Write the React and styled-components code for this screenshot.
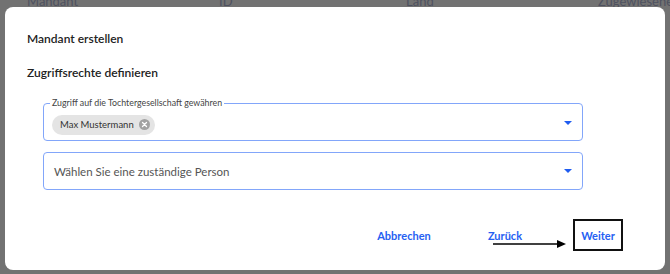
import React from "react";
import styled, { createGlobalStyle } from "styled-components";

const GlobalStyle = createGlobalStyle`
  html, body {
    margin: 0;
    padding: 0;
    width: 670px;
    height: 274px;
    overflow: hidden;
    background: #737373;
    font-family: "Lato", "Open Sans", sans-serif;
  }
`;

const Backdrop = styled.div`
  position: relative;
  width: 670px;
  height: 274px;
  background: #727272;
  padding: 7px 5px 4px 5px;
  box-sizing: border-box;
`;

const HeaderRow = styled.div`
  position: absolute;
  top: -7px;
  left: 0;
  right: 0;
  display: grid;
  grid-template-columns: 27px 192px 187px 192px 1fr;
  font-size: 13px;
  color: #4e5160;
  white-space: nowrap;
  overflow: hidden;
`;

const Modal = styled.div`
  position: relative;
  height: 100%;
  background: #fff;
  border-radius: 8px;
  padding: 24px 22px 0 22px;
  box-sizing: border-box;
  display: flex;
  flex-direction: column;
`;

const Title = styled.div`
  font-size: 12px;
  font-weight: 600;
  color: #222;
  line-height: 16px;
`;

const SubTitle = styled(Title)`
  margin-top: 18px;
`;

const Fields = styled.div`
  margin: 22px 0 0 16px;
  width: 540px;
  display: flex;
  flex-direction: column;
  gap: 11px;
`;

const Field = styled.div`
  height: 38px;
  box-sizing: border-box;
  border: 1.5px solid #82a6fa;
  border-radius: 4px;
  padding: 0 10px 0 8px;
  display: flex;
  align-items: center;
  justify-content: space-between;
  position: relative;
`;

const Legend = styled.span`
  position: absolute;
  top: -6px;
  left: 6px;
  padding: 0 2px;
  background: #fff;
  font-size: 8.8px;
  line-height: 10px;
  color: #444;
  white-space: nowrap;
`;

const Chip = styled.span`
  display: inline-flex;
  align-items: center;
  gap: 5px;
  height: 20px;
  padding: 0 5px 0 8px;
  margin-top: 5px;
  border-radius: 10px;
  background: #e4e4e4;
  font-size: 9.5px;
  color: #333;
`;

const ChipClose = styled.span`
  width: 11px;
  height: 11px;
  border-radius: 50%;
  background: #a2a2a2;
  display: inline-flex;
  align-items: center;
  justify-content: center;
`;

const Placeholder = styled.span`
  font-size: 11.5px;
  color: #555;
  padding-left: 2px;
`;

const Caret = styled.span`
  width: 0;
  height: 0;
  border-left: 4px solid transparent;
  border-right: 4px solid transparent;
  border-top: 4px solid #1f5cf0;
  margin-top: ${(p) => p.offset || 0}px;
`;

const Footer = styled.div`
  position: relative;
  margin-top: 29px;
  display: flex;
  align-items: center;
  justify-content: flex-end;
  padding-right: 20px;
`;

const TextButton = styled.button`
  background: none;
  border: ${(p) => (p.marked ? "2px solid #111" : "2px solid transparent")};
  font-family: inherit;
  font-size: 11px;
  font-weight: 700;
  color: #2660f2;
  padding: 0;
  height: 32px;
  width: ${(p) => p.w}px;
  margin-left: ${(p) => p.gap || 0}px;
  cursor: pointer;
`;

const Arrow = styled.svg`
  position: absolute;
  left: 466px;
  top: 20px;
`;

export default function App() {
  return (
    <>
      <GlobalStyle />
      <Backdrop>
        <HeaderRow>
          <span />
          <span>Mandant</span>
          <span>ID</span>
          <span>Land</span>
          <span>Zugewiesene</span>
        </HeaderRow>
        <Modal>
          <Title>Mandant erstellen</Title>
          <SubTitle>Zugriffsrechte definieren</SubTitle>
          <Fields>
            <Field>
              <Legend>Zugriff auf die Tochtergesellschaft gewähren</Legend>
              <Chip>
                Max Mustermann
                <ChipClose>
                  <svg width="7" height="7" viewBox="0 0 7 7">
                    <path d="M1.5 1.5 L5.5 5.5 M5.5 1.5 L1.5 5.5" stroke="#fff" strokeWidth="1.3" strokeLinecap="round" />
                  </svg>
                </ChipClose>
              </Chip>
              <Caret offset={1} />
            </Field>
            <Field>
              <Placeholder>Wählen Sie eine zuständige Person</Placeholder>
              <Caret />
            </Field>
          </Fields>
          <Footer>
            <TextButton w={60}>Abbrechen</TextButton>
            <TextButton w={40} gap={51}>Zurück</TextButton>
            <TextButton w={50} gap={48} marked>Weiter</TextButton>
            <Arrow width="74" height="10" viewBox="0 0 74 10">
              <line x1="0" y1="5" x2="66" y2="5" stroke="#000" strokeWidth="1.5" />
              <path d="M64 1 L73 5 L64 9 Z" fill="#000" />
            </Arrow>
          </Footer>
        </Modal>
      </Backdrop>
    </>
  );
}
